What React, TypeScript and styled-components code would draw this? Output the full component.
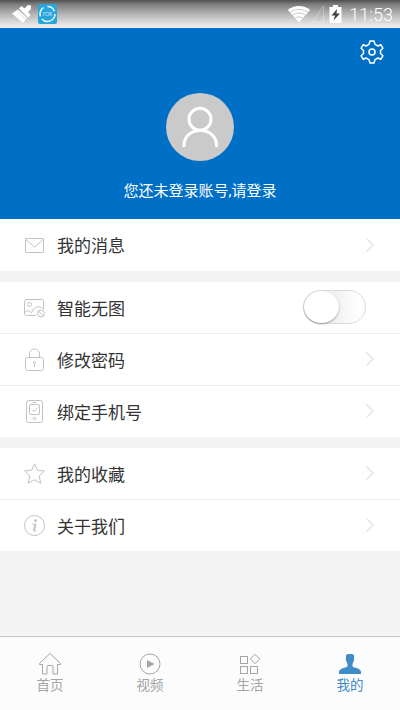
import type { ReactNode } from 'react';
import styled, { createGlobalStyle } from 'styled-components';

interface itemType {
  label: string;
  icon: ReactNode;
  toggle?: boolean;
}
interface tabType {
  label: string;
  icon: ReactNode;
  active?: boolean;
}

const MailIcon = () => (
  <RowIcon viewBox="0 0 25 26">
    <rect x="3.5" y="6.5" width="18" height="14" rx="0.5" />
    <path d="M3.8 7.5 L12.5 15 L21.2 7.5" />
  </RowIcon>
);
const NoImageIcon = () => (
  <RowIcon viewBox="0 0 25 26">
    <path d="M14 20.5H4.5a2 2 0 0 1-2-2V6.500a2 2 0 0 1 2-2h15a2 2 0 0 1 2 2V14" />
    <circle cx="7.500" cy="9.500" r="2" />
    <path d="M2.800 17.500c1.800-2.300 4-2.300 5.500-.5l1.200.8c1.800-4.500 4-6 6.700-6 2.600 0 3.900.8 5.300 2.600" />
    <circle cx="19" cy="18.500" r="3.500" />
    <path d="M16.500 16l5 5" />
  </RowIcon>
);
const LockIcon = () => (
  <RowIcon viewBox="0 0 25 26">
    <rect x="3.500" y="10.500" width="18" height="13" rx="2" />
    <path d="M7.500 10.500V7a5 5 0 0 1 10 0v3.500" />
    <circle cx="12.500" cy="15.500" r="1" />
    <path d="M12.500 16.500v3.500" />
  </RowIcon>
);
const PhoneIcon = () => (
  <RowIcon viewBox="0 0 25 26">
    <rect x="4.500" y="1.500" width="16" height="22" rx="2" />
    <rect x="7.500" y="5.500" width="10" height="10" rx="1.500" />
    <path d="M10.500 3.500h4M9.800 10.500l2 2 3.700-4" />
    <circle cx="12.500" cy="19.500" r="1.300" />
  </RowIcon>
);
const StarIcon = () => (
  <RowIcon viewBox="0 0 25 26">
    <path
      strokeLinejoin="round"
      d="M12.500 2.700l2.900 6.500 7 .8-5.200 4.800 1.500 7.400-6.200-3.400-6.200 3.400 1.500-7.400L2.600 10l7-.8z"
    />
  </RowIcon>
);
const InfoIcon = () => (
  <RowIcon viewBox="0 0 25 26">
    <circle cx="12.500" cy="12.500" r="10" />
    <circle cx="13.500" cy="7.600" r="1.300" fill="#bdbdbd" stroke="none" />
    <path strokeWidth="1.900" d="M13.500 11l-1.600 6.700" />
    <path d="M10.300 11.300l3.200-.5M11.900 17.700c.2.800 1.300.5 2.300-.6" />
  </RowIcon>
);

const HomeIcon = () => (
  <TabIcon viewBox="0 0 24 24">
    <path
      strokeLinejoin="round"
      d="M12 1.500L1.500 11.500v1h3v9.500h4.500v-7.500q0-1 1-1h4q1 0 1 1v7.500h4.500v-9.500h3v-1z"
    />
  </TabIcon>
);
const VideoIcon = () => (
  <TabIcon viewBox="0 0 24 24">
    <circle cx="12" cy="12" r="10" />
    <path fill="currentColor" stroke="none" d="M9 8l7.500 4L9 16z" />
  </TabIcon>
);
const LifeIcon = () => (
  <TabIcon viewBox="0 0 24 24">
    <rect x="2.500" y="4.500" width="7" height="7" />
    <rect x="2.500" y="14.500" width="7" height="7" />
    <rect x="12.500" y="14.500" width="7" height="7" />
    <path d="M17 2.300l4.700 4.700-4.700 4.700L12.300 7z" />
  </TabIcon>
);
const MineIcon = () => (
  <TabIcon viewBox="0 0 24 24">
    <path
      fill="currentColor"
      stroke="none"
      d="M8 4c0-1.600 1-2 4-2s4 .4 4 2v2.500c.4.800.2 2-.5 2.700-.2 1.200-.5 1.800-1 2.500v2.800c1.500 1.500 8.500 1.500 8.500 5.500v2H1v-2c0-4 7-4 8.500-5.500v-2.800c-.5-.7-.8-1.300-1-2.500-.7-.7-.9-1.900-.5-2.700z"
    />
  </TabIcon>
);

const groups: itemType[][] = [
  [{ label: '我的消息', icon: <MailIcon /> }],
  [
    { label: '智能无图', icon: <NoImageIcon />, toggle: true },
    { label: '修改密码', icon: <LockIcon /> },
    { label: '绑定手机号', icon: <PhoneIcon /> },
  ],
  [
    { label: '我的收藏', icon: <StarIcon /> },
    { label: '关于我们', icon: <InfoIcon /> },
  ],
];

const tabs: tabType[] = [
  { label: '首页', icon: <HomeIcon /> },
  { label: '视频', icon: <VideoIcon /> },
  { label: '生活', icon: <LifeIcon /> },
  { label: '我的', icon: <MineIcon />, active: true },
];

const App = () => {
  return (
    <Page>
      <GlobalStyle />
      <StatusBar>
        <svg width="22" height="22" viewBox="0 0 22 22">
          <path
            fill="#fff"
            d="M8 5.500L10.500 3l3 2.500L17 2l3 .5v3.500L17 9l2.500 3-2.500 2.500z"
          />
          <path fill="#fff" d="M7 6.500L16 15l-4 5L1 10.500z" />
          <path stroke="#bdbdbd" strokeWidth="0.500" d="M5.500 7.800l9 8.500" />
        </svg>
        <AppBadge>
          <svg width="19" height="20" viewBox="0 0 19 20">
            <circle
              cx="9.500"
              cy="10"
              r="7.500"
              fill="none"
              stroke="#e8f8ff"
              strokeWidth="1.500"
              strokeDasharray="18 3 10 4 9 3"
            />
          </svg>
          <span>rox</span>
        </AppBadge>
        <Spacer />
        <svg width="24" height="19" viewBox="0 0 24 19">
          <path fill="#fff" d="M12 17.500L.8 5C7-.2 17-.2 23.200 5z" />
          <g fill="none" stroke="#c4c4c4" strokeWidth="0.900">
            <path d="M3 7.600c5-4.300 13-4.300 18 0" />
            <path d="M5.500 10.400c4-3.200 9-3.200 13 0" />
            <path d="M8.200 13.200c2.400-1.800 5.200-1.800 7.600 0" />
          </g>
        </svg>
        <svg width="18" height="20" viewBox="0 0 18 20">
          <path
            fill="none"
            stroke="#fff"
            strokeOpacity="0.300"
            d="M12.500 2v16H1.500z"
          />
        </svg>
        <svg width="14" height="20" viewBox="0 0 14 20">
          <path fill="#fff" d="M4 1h5v2h3.500v16H.5V3H4z" />
          <path fill="#444" d="M8 5l-5.500 6.500H6L4.500 16.500 11 9.500H7.500z" />
        </svg>
        <Clock>11:53</Clock>
      </StatusBar>
      <Header>
        <Settings viewBox="0 0 24 24">
          <path
            strokeLinejoin="round"
            d="M10 1h4l1 3.300 3 1.700 2.700-1.400 2.200 3.600L20.500 10.500v3l2.400 2.300-2.200 3.600L18 18l-3 1.700L14 23h-4l-1-3.300L6 18l-2.700 1.400L1.100 15.800l2.400-2.300v-3L1.100 8.200l2.200-3.600L6 6l3-1.700z"
          />
          <circle cx="12" cy="12" r="3" />
        </Settings>
        <Avatar>
          <svg width="68" height="68" viewBox="0 0 68 68">
            <circle cx="34" cy="26.300" r="11" />
            <path d="M18 54v-1.500C18 43.500 25 37.500 34.300 37.500S50.500 43.500 50.500 52.500V54" />
          </svg>
        </Avatar>
        <LoginText>您还未登录账号,请登录</LoginText>
      </Header>
      <Content>
        {groups.map((items, index) => (
          <Group key={index}>
            {items.map((item) => (
              <Row key={item.label}>
                {item.icon}
                <RowLabel>{item.label}</RowLabel>
                {item.toggle ? (
                  <Switch>
                    <Knob />
                  </Switch>
                ) : (
                  <Chevron viewBox="0 0 10 16">
                    <path d="M1.500 1.500L8 8l-6.500 6.500" />
                  </Chevron>
                )}
              </Row>
            ))}
          </Group>
        ))}
      </Content>
      <TabBar>
        {tabs.map((tab) => (
          <Tab key={tab.label} $active={tab.active}>
            {tab.icon}
            <span>{tab.label}</span>
          </Tab>
        ))}
      </TabBar>
    </Page>
  );
};

const GlobalStyle = createGlobalStyle`
  * {
    box-sizing: border-box;
  }
  body {
    margin: 0;
    font-family: 'Noto Sans CJK SC', sans-serif;
  }
  svg {
    display: block;
    flex-shrink: 0;
  }
`;
const Page = styled.div`
  width: 400px;
  height: 710px;
  display: flex;
  flex-direction: column;
  background: #f4f4f4;
  overflow: hidden;
`;
const StatusBar = styled.div`
  height: 28px;
  flex-shrink: 0;
  display: flex;
  align-items: center;
  padding: 0 7px 0 11px;
  background: linear-gradient(#4f4f4f, #7d7d7d 15%, #b4b4b4 50%, #e2e2e2 85%, #efefef);
`;
const AppBadge = styled.div`
  width: 19px;
  height: 20px;
  margin-left: 5px;
  border-radius: 2px;
  background: #27a5dc;
  display: grid;
  place-items: center;
  > * {
    grid-area: 1 / 1;
  }
  span {
    color: #fff;
    font: 300 7px/10px Roboto, sans-serif;
  }
`;
const Spacer = styled.div`
  flex: 1;
`;
const Clock = styled.div`
  width: 44px;
  margin-left: 6px;
  padding-top: 2px;
  color: #fff;
  font: 300 18px/26px Roboto, sans-serif;
  white-space: nowrap;
  text-align: right;
`;
const Header = styled.div`
  height: 191px;
  flex-shrink: 0;
  display: flex;
  flex-direction: column;
  align-items: center;
  padding-top: 12px;
  background: #0070c6;
`;
const Settings = styled.svg`
  width: 24px;
  height: 24px;
  align-self: flex-end;
  margin-right: 16px;
  fill: none;
  stroke: #fff;
  stroke-width: 1.5;
`;
const Avatar = styled.div`
  width: 68px;
  height: 68px;
  margin-top: 29px;
  border-radius: 50%;
  background: #cacaca;
  svg {
    fill: none;
    stroke: #fff;
    stroke-width: 3;
  }
`;
const LoginText = styled.div`
  margin-top: 19px;
  color: #fff;
  font-family: Roboto, 'Noto Sans CJK SC', sans-serif;
  font-size: 15px;
  line-height: 22px;
`;
const Content = styled.div`
  flex: 1;
  display: flex;
  flex-direction: column;
  gap: 10.5px;
`;
const Row = styled.div`
  height: 52px;
  display: flex;
  align-items: center;
  padding: 0 25px 0 22px;
  border-bottom: 1px solid #eeeeee;
`;
const RowIcon = styled.svg`
  width: 25px;
  height: 26px;
  fill: none;
  stroke: #c2c2c2;
  stroke-width: 1;
`;
const RowLabel = styled.div`
  flex: 1;
  margin-left: 10px;
  color: #333;
  font-size: 17px;
  line-height: 24px;
`;
const Group = styled.div`
  background: #fff;
  ${Row}:last-child {
    height: 51.5px;
    border-bottom: none;
  }
  ${Row}:only-child {
    height: 52px;
  }
  ${Row}:not(:only-child) ${RowIcon}, ${Row}:not(:only-child) ${RowLabel} {
    margin-top: 1px;
  }
`;
const Chevron = styled.svg`
  width: 10px;
  height: 16px;
  fill: none;
  stroke: #e6e6e6;
  stroke-width: 1.5;
`;
const Switch = styled.div`
  width: 63px;
  height: 34px;
  margin: -1px 9px 0 0;
  border: 1px solid #dcdcdc;
  border-radius: 17px;
  background: linear-gradient(90deg, #f1f1f1 50%, #fdfdfd 85%);
`;
const Knob = styled.div`
  width: 35px;
  height: 32px;
  border-radius: 50%;
  background: #fff;
  box-shadow: 0 1px 2px rgba(0, 0, 0, 0.35);
`;
const TabBar = styled.div`
  height: 74px;
  flex-shrink: 0;
  display: flex;
  border-top: 1px solid #c8c8c8;
  background: #fcfcfc;
`;
const Tab = styled.div<{ $active?: boolean }>`
  flex: 1;
  display: flex;
  flex-direction: column;
  align-items: center;
  padding-top: 15px;
  color: ${({ $active }) => ($active ? '#428bca' : '#a5a5a5')};
  font-size: 13.5px;
  line-height: 18px;
  span {
    margin-top: -1px;
  }
`;
const TabIcon = styled.svg`
  width: 24px;
  height: 24px;
  fill: none;
  stroke: currentColor;
  stroke-width: 1;
`;
export default App;
